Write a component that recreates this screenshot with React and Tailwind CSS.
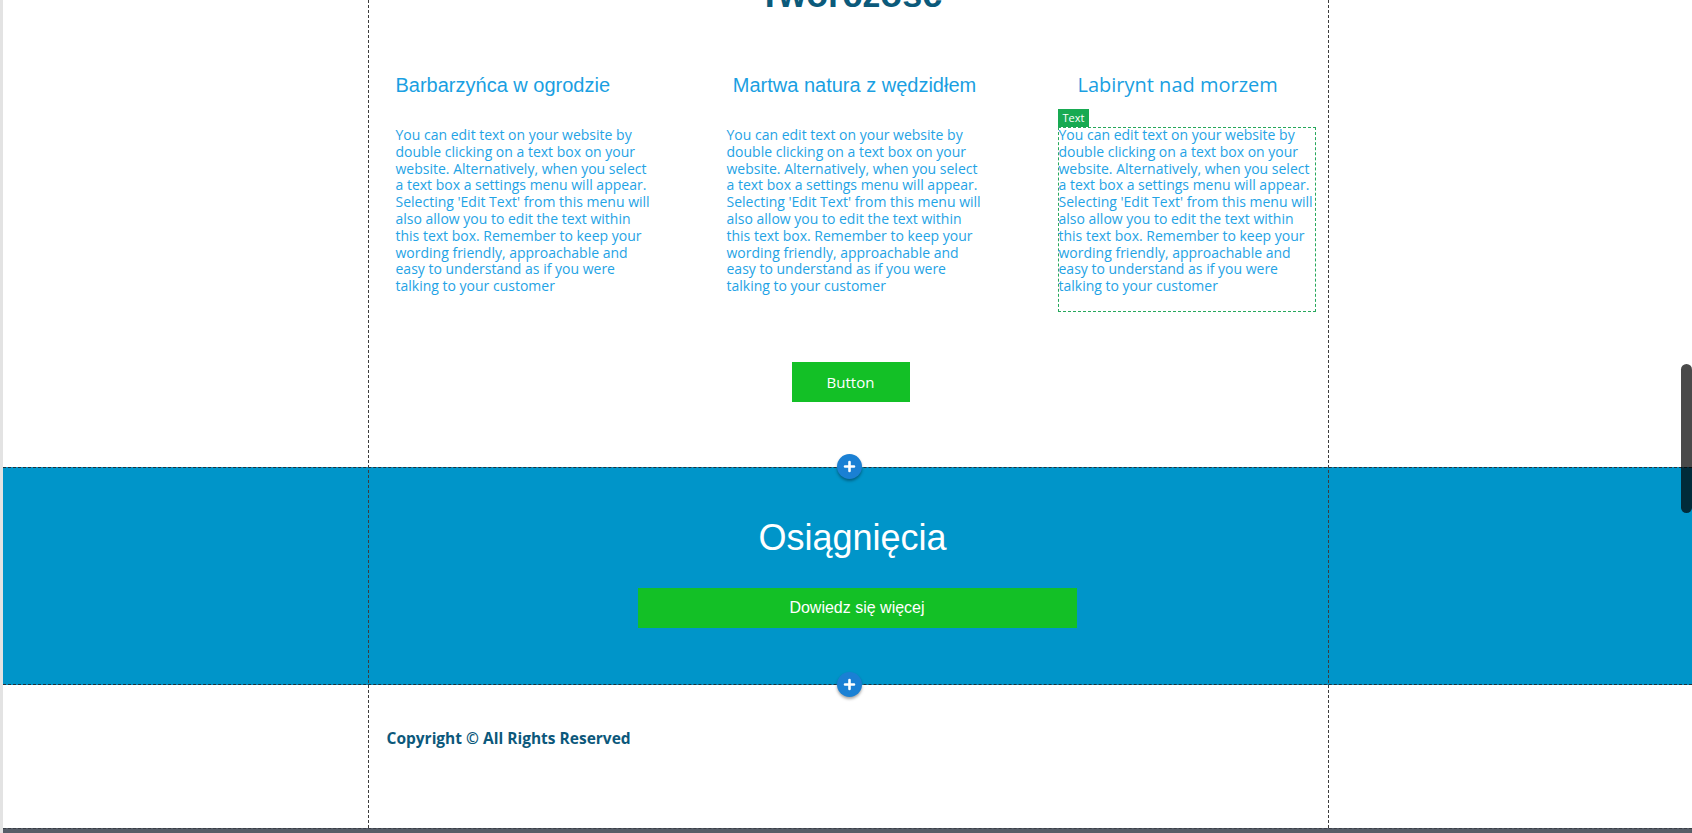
import React from "react";

const body =
  "You can edit text on your website by double clicking on a text box on your website. Alternatively, when you select a text box a settings menu will appear. Selecting 'Edit Text' from this menu will also allow you to edit the text within this text box. Remember to keep your wording friendly, approachable and easy to understand as if you were talking to your customer";

const openSans = "font-['Open_Sans',sans-serif]";
const arial = "font-['Liberation_Sans',Arial,sans-serif]";

const AddButton = ({ className }) => (
  <div
    className={`absolute left-[837px] w-[25px] h-[25px] rounded-full bg-[#1a80d4] shadow-[0_2px_3px_rgba(0,0,0,0.35)] flex items-center justify-center z-20 ${className}`}
  >
    <svg width="13" height="13" viewBox="0 0 13 13">
      <path d="M6.5 2v9M2 6.5h9" stroke="#fff" strokeWidth="2.6" strokeLinecap="round" />
    </svg>
  </div>
);

export default function App() {
  return (
    <div className="relative h-[833px] w-full overflow-hidden bg-white flex">
      {/* left edge */}
      <div className="w-[3px] shrink-0 bg-[#e3e3e3]" />

      <div className="flex-1 flex flex-col">
        {/* top section */}
        <section className="h-[467px]">
          <div className="w-[962px] mx-auto">
            <h2
              className={`${arial} text-[36px] leading-[36px] font-bold text-[#0b5a7b] text-center pl-[6px] mt-[-23px]`}
            >
              Twórczość
            </h2>

            <div className="grid grid-cols-[256px_256px_258px] gap-x-[75px] pl-[29px] mt-[60px]">
              {/* column 1 */}
              <div>
                <h3 className={`${arial} text-[20px] leading-[24px] text-[#1a9fe2]`}>
                  Barbarzyńca w ogrodzie
                </h3>
                <p className={`${openSans} mt-[30px] text-[14px] leading-[1.2] text-[#1fa3e5]`}>
                  {body}
                </p>
              </div>

              {/* column 2 */}
              <div>
                <h3 className={`${arial} text-[20px] leading-[24px] text-[#1a9fe2] text-center`}>
                  Martwa natura z wędzidłem
                </h3>
                <p className={`${openSans} mt-[30px] text-[14px] leading-[1.2] text-[#1fa3e5]`}>
                  {body}
                </p>
              </div>

              {/* column 3 (selected) */}
              <div>
                <h3 className={`${openSans} text-[20px] leading-[24px] text-[#1a9fe2] pl-[20px]`}>
                  Labirynt nad morzem
                </h3>
                <div className="relative mt-[30px] h-[185px] border border-dashed border-[#27a85c]">
                  <span
                    className={`${openSans} absolute left-[-1px] top-[-19px] h-[18px] px-[5px] bg-[#18aa52] text-white text-[11px] leading-[18px]`}
                  >
                    Text
                  </span>
                  <p className={`${openSans} text-[14px] leading-[1.2] text-[#1fa3e5] mt-[-1px]`}>
                    {body}
                  </p>
                </div>
              </div>
            </div>

            <div className="flex justify-center pl-[6px] mt-[50px]">
              <button
                className={`${openSans} w-[118px] h-[40px] bg-[#13c026] text-white text-[15px]`}
              >
                Button
              </button>
            </div>
          </div>
        </section>

        {/* blue section */}
        <section className="h-[218px] bg-[#0095c9] border-y border-dashed border-[#22313b]">
          <div className="w-[962px] mx-auto pt-[48px]">
            <h2 className={`${arial} text-[36px] leading-[1.2] text-white text-center pl-[10px]`}>
              Osiągnięcia
            </h2>
            <button
              className={`${arial} block ml-[271px] mt-[29px] w-[439px] h-[40px] bg-[#13c026] text-white text-[16px]`}
            >
              Dowiedz się więcej
            </button>
          </div>
        </section>

        {/* footer */}
        <footer className="h-[143px]">
          <div className="w-[962px] mx-auto pt-[41px] pl-[20px]">
            <p className={`${openSans} text-[15.5px] leading-[24px] font-bold text-[#0c587b]`}>
              Copyright © All Rights Reserved
            </p>
          </div>
        </footer>

        {/* bottom bar */}
        <div className="h-[5px] bg-[#575d68] border-t border-dashed border-[#3a3f47]" />
      </div>

      {/* editor guides */}
      <div className="absolute left-[368px] top-0 h-[828px] w-0 border-l border-dashed border-[#3d3d3d] z-10" />
      <div className="absolute left-[1328px] top-0 h-[828px] w-0 border-l border-dashed border-[#3d3d3d] z-10" />

      <AddButton className="top-[454px]" />
      <AddButton className="top-[672px]" />

      {/* scrollbar thumb */}
      <div className="absolute right-0 top-[364px] w-[11px] h-[149px] rounded-full bg-[rgba(0,0,0,0.71)] z-30" />
    </div>
  );
}
